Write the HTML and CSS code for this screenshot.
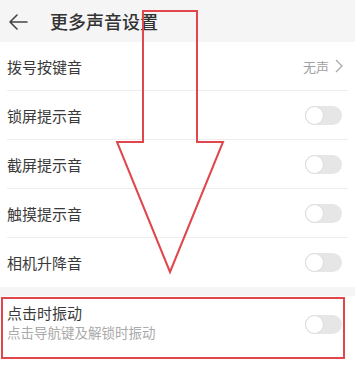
FILE: index.html
```html
<!DOCTYPE html>
<html lang="zh">
<head>
<meta charset="utf-8">
<link rel="stylesheet" href="styles.css">
</head>
<body>
<div class="page">
  <div class="header">
    <svg class="back" width="20" height="16" viewBox="0 0 20 16"><path d="M9 1 L2 8 L9 15 M2 8 H19" fill="none" stroke="#444" stroke-width="1.6" stroke-linecap="round" stroke-linejoin="round"/></svg>
    <div class="title">更多声音设置</div>
  </div>
  <div class="list">
    <div class="row">
      <span class="label">拨号按键音</span>
      <span class="value">无声<svg class="chev" width="8" height="14" viewBox="0 0 8 14"><path d="M1 1 L7 7 L1 13" fill="none" stroke="#aaa" stroke-width="1.3"/></svg></span>
    </div>
    <div class="row"><span class="label">锁屏提示音</span><span class="toggle"><span class="knob"></span></span></div>
    <div class="row"><span class="label">截屏提示音</span><span class="toggle"><span class="knob"></span></span></div>
    <div class="row"><span class="label">触摸提示音</span><span class="toggle"><span class="knob"></span></span></div>
    <div class="row last"><span class="label">相机升降音</span><span class="toggle"><span class="knob"></span></span></div>
  </div>
  <div class="gap"></div>
  <div class="list section">
    <div class="row tall">
      <div class="texts">
        <div class="label">点击时振动</div>
        <div class="sub">点击导航键及解锁时振动</div>
      </div>
      <span class="toggle"><span class="knob"></span></span>
    </div>
  </div>
  <svg class="overlay" width="355" height="369" viewBox="0 0 355 369">
    <polygon points="143,11 197,11 197,142 223,142 170,272 117,142 143,142" fill="none" stroke="#e0464c" stroke-width="2"/>
    <rect x="2" y="298" width="342" height="60" fill="none" stroke="#e0464c" stroke-width="2"/>
  </svg>
</div>
</body>
</html>
```
FILE: styles.css
```css
html, body {
  margin: 0;
  padding: 0;
  background: #fff;
}
body {
  font-family: "Noto Sans CJK SC", "Noto Sans", sans-serif;
  color: #333;
}
.page {
  position: relative;
  width: 355px;
  height: 369px;
  overflow: hidden;
}
.header {
  height: 42px;
  background: #f5f5f5;
  display: flex;
  align-items: center;
}
.back {
  margin-left: 8px;
  margin-top: 1px;
}
.title {
  margin-left: 22px;
  font-size: 18px;
  font-weight: 500;
  color: #333;
}
.list {
  background: #fff;
}
.row {
  height: 48px;
  margin: 0 7px;
  padding-right: 6px;
  border-bottom: 1px solid #eeeeee;
  display: flex;
  align-items: center;
  justify-content: space-between;
}
.row.last {
  border-bottom: none;
  height: 49px;
}
.label {
  font-size: 15px;
  color: #3a3a3a;
}
.value {
  font-size: 13px;
  color: #a0a0a0;
  display: flex;
  align-items: center;
  gap: 6px;
  margin-right: -1px;
}
.toggle {
  width: 37px;
  height: 19px;
  border-radius: 10px;
  background: #e6e6e6;
  position: relative;
  display: block;
}
.knob {
  position: absolute;
  left: 0;
  top: 0;
  width: 17px;
  height: 17px;
  border-radius: 50%;
  background: #fff;
  border: 1px solid #dcdcdc;
}
.gap {
  height: 9px;
  background: #f5f5f5;
}
.row.tall {
  height: 77px;
  border-bottom: none;
  align-items: flex-start;
}
.texts {
  padding-top: 6px;
}
.sub {
  font-size: 13.5px;
  color: #aaaaaa;
  margin-top: -1px;
}
.row.tall .toggle {
  margin-top: 19px;
}
.overlay {
  position: absolute;
  left: 0;
  top: 0;
  pointer-events: none;
}
```
